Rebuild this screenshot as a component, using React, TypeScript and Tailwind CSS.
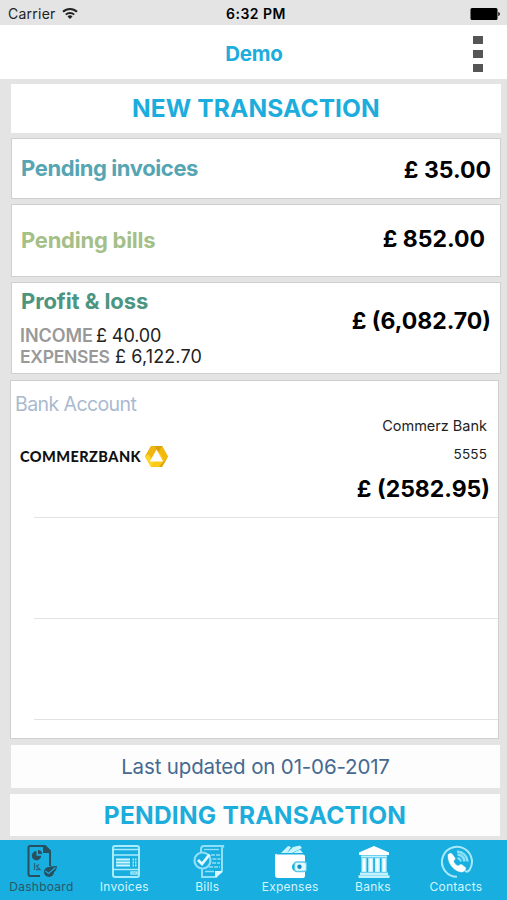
import type { ReactNode } from "react";

function Wifi() {
  return (
    <svg className="ml-[6px] h-[13px] w-[16px]" viewBox="0 0 16 13" fill="none" stroke="#222" strokeWidth="2">
      <path d="M1 4.8a10 10 0 0 1 14 0" />
      <path d="M3.8 7.6a6 6 0 0 1 8.4 0" />
      <path d="M8 12 5.5 9.5a3.6 3.6 0 0 1 5 0Z" fill="#222" stroke="none" />
    </svg>
  );
}

function StatusBar() {
  return (
    <div className="grid h-[25px] grid-cols-3 items-center pt-[2px] pr-[7px] pl-[8px] text-[14px] leading-none text-[#222]">
      <div className="flex items-center">
        <span className="tracking-[0.250px]">Carrier</span>
        <Wifi />
      </div>
      <div className="pl-[4px] text-center text-[14px] font-semibold tracking-[0.500px] whitespace-nowrap text-black">6:32 PM</div>
      <svg className="h-[12px] w-[30px] justify-self-end" viewBox="0 0 30 12">
        <rect x="0.5" y="0" width="27" height="12" rx="1.5" />
        <path d="M28.3 4c2 .5 2 3.500 0 4z" />
      </svg>
    </div>
  );
}

function Card({ className, children }: { className: string; children: ReactNode }) {
  return <section className={`shrink-0 border border-[#cfcfcf] bg-white ${className}`}>{children}</section>;
}

function DashboardIcon() {
  return (
    <svg className="h-[34px] w-[34px]" viewBox="0 0 34 34" fill="none" stroke="#28505f" strokeWidth="2">
      <path d="M16 31H6a1.500 1.500 0 0 1-1.500-1.500V2.500A1.500 1.500 0 0 1 6 1h15l5 5v15" />
      <path d="M20 1v6h6" fill="#28505f" />
      <path d="M12.500 6a4.700 4.700 0 1 0 4.700 4.700h-4.700z" fill="#28505f" stroke="none" />
      <path d="M14 5a4 4 0 0 1 4 4h-4z" fill="#28505f" stroke="none" />
      <path d="M10.500 18v7M12 20.500l4 4h-4M13 21l2-1.500" strokeWidth="1.300" opacity="0.750" />
      <circle cx="25" cy="27" r="5" fill="#28505f" stroke="none" />
      <path d="M25.500 21.500 33 21c-.5 4-2 6-5 7z" fill="#28505f" stroke="none" />
      <path d="m21.500 26 3 2.500 7-6" stroke="#18aee0" strokeWidth="1.100" />
    </svg>
  );
}

function InvoicesIcon() {
  return (
    <svg className="ml-[2px] h-[34px] w-[34px]" viewBox="0 0 34 34" fill="none" stroke="#a9ecfd" strokeWidth="2">
      <rect x="5" y="1" width="26" height="31" rx="2" />
      <path d="M5 4.500h26M5 10h26M5 24.500h26" strokeWidth="1.600" />
      <path d="M8 14.500h14M8 17.500h14M8 20.500h14" stroke="#cdf7ff" strokeWidth="2" />
      <path d="M24.500 14.500h4M24.500 17.500h4M24.500 20.500h4" strokeWidth="2" strokeDasharray="1.500 1" />
      <rect x="23" y="27" width="6" height="2" strokeWidth="1.400" />
    </svg>
  );
}

function BillsIcon() {
  return (
    <svg className="ml-[3px] h-[34px] w-[34px]" viewBox="0 0 34 34" fill="none" stroke="#8fe0f8" strokeWidth="2">
      <path d="M9 7V4a3 3 0 0 1 3-3h20a3 3 0 0 0-2 3v22l-6 6H10V24" />
      <path d="M24 32v-5h6" fill="#dcfaff" stroke="#dcfaff" />
      <path d="M12 4.500h15" strokeWidth="1.300" />
      <path d="M19 10h9M20.500 14h8M20 18h8M17 22h11" strokeWidth="1.700" strokeDasharray="4 1" />
      <path d="M13 26.500h9" strokeWidth="1.500" />
      <circle cx="10.500" cy="15.500" r="8" fill="#18aee0" strokeWidth="2.200" />
      <path d="m6 15 4 4 7.500-9.500" stroke="#e7fcff" strokeWidth="2.800" />
    </svg>
  );
}

function ExpensesIcon() {
  return (
    <svg className="h-[34px] w-[34px]" viewBox="0 0 34 34">
      <path d="m8 8 7-7 3 1-4 6zM14 8l6-6 7-1.500 2 2.500-10 5zM20 8l7-3.500 3 3.500z" fill="#c9f5ff" />
      <path d="M3 8.500a2 2 0 0 0 2 1h25a2 2 0 0 1 2 2V17h-8a5 5 0 0 0 0 10h8v4a2 2 0 0 1-2 2H5a3 3 0 0 1-3-3V10z" fill="#fff" />
      <rect x="21.500" y="17" width="12" height="9.500" rx="2.500" fill="#e4f9ff" stroke="#58cbea" strokeWidth="1.300" />
      <circle cx="26.500" cy="21.800" r="2.200" fill="#158eb8" />
    </svg>
  );
}

function BanksIcon() {
  return (
    <svg className="ml-[2px] h-[34px] w-[34px]" viewBox="0 0 34 34" fill="#c4f2ff">
      <path d="M17 1 2 7.500V10h30V7.500z" fill="#fff" />
      <path d="M4 10.500h26v2H4zM3 27.500h28V30H3zM1.500 30.300h31V33h-31z" />
      <path d="M4.500 13h5v14h-5zM11.200 13h5v14h-5zM17.900 13h5v14h-5zM24.600 13h5v14h-5z" />
      <path d="M7 14v12M13.700 14v12M20.400 14v12M27.100 14v12" stroke="#fff" strokeWidth="2" />
    </svg>
  );
}

function ContactsIcon() {
  return (
    <svg className="ml-[3px] h-[34px] w-[34px]" viewBox="0 0 34 34" fill="none" stroke="#a9eafa" strokeWidth="2">
      <path d="M17 31.800A15 15 0 1 1 29.500 25c-1.500 1.800-3 2-4.500 1" />
      <path d="M8 11c0-2.500 2.500-3.500 4-2l3 4c.7 1.200-1.500 2.500-1.500 3.500 1 2 2.500 3.500 4.500 4.500 1 0 2-2 3.500-1.500l4 3c1 2-1.500 4.500-4 4.500C15 26.500 8 19.500 8 11z" fill="#fff" stroke="#fff" strokeWidth="0.500" />
      <path d="M17 6.500c6 .5 10 4.500 10.500 10M17.500 9.500c4.500.5 6.500 3 7 7" stroke="#8be2f8" strokeWidth="2.600" />
      <path d="M17.500 13c2 .5 3 1.500 3.500 3.500" stroke="#8be2f8" strokeWidth="2" />
    </svg>
  );
}

function Tab({ icon, label, active = false }: { icon: ReactNode; label: string; active?: boolean }) {
  return (
    <div className="flex w-[82.900px] shrink-0 flex-col items-center pt-[5px]">
      {icon}
      <span className={`text-[12px] leading-[16px] tracking-[0.250px] ${active ? "text-[#2b5766]" : "text-[#d4f5ff]"}`}>{label}</span>
    </div>
  );
}

function BankLogo() {
  return (
    <div className="flex items-center">
      <span className="w-[122px] pt-px font-['Lato'] text-[14.500px] leading-[20px] font-black tracking-[0.450px] whitespace-nowrap text-[#111]">COMMERZBANK</span>
      <svg className="ml-[3px] h-[21px] w-[23px]" viewBox="0 0 23 21">
        <path d="M6 0h11l6 10.500L17 21H6L0 10.500z" fill="#fbc916" />
        <path d="M6 0h5.500v3.500L5 14.500 0 10.500z" fill="#f0b512" />
        <path d="M10 0h7l2 3.500-3 4.500-5-5z" fill="#d9a010" />
        <path d="m17 0 6 10.500-3 5.500L14 5z" fill="#f2b90f" />
        <path d="m0 10.500 3.500-2L9 16l-3 5z" fill="#ffd52a" />
        <path d="m18 15.500 3.500-2.500L17 21h-3z" fill="#e0a50b" />
        <path d="M11.500 3.700 4.800 15.500h13.400z" fill="#fff" />
      </svg>
    </div>
  );
}

export default function App() {
  return (
    <div className="flex h-[900px] w-[507px] flex-col overflow-hidden bg-[#e4e4e4] font-['Inter',sans-serif]">
      <StatusBar />
      <header className="flex h-[54px] shrink-0 items-center bg-white">
        <div className="w-[61px]" />
        <h1 className="grow pt-[3px] text-center text-[20.500px] leading-[30px] font-bold tracking-[-0.200px] text-[#1caddd]">
          Demo
        </h1>
        <div className="mt-[3px] mr-[24px] ml-[26px] flex w-[10px] flex-col gap-[6px]">
          <span className="h-[8px] bg-[#555]" />
          <span className="h-[8px] bg-[#555]" />
          <span className="h-[8px] bg-[#555]" />
        </div>
      </header>

      <button className="mt-[5px] mr-[6px] ml-[11px] h-[49px] shrink-0 bg-white text-center text-[24.500px] font-bold tracking-[0.120px] text-[#1caddd]">
        NEW TRANSACTION
      </button>

      <Card className="mt-[5px] mr-[6px] ml-[11px] flex h-[61px] items-center justify-between pr-[9px] pl-[9px]">
        <h2 className="pb-px text-[22px] leading-[28px] font-bold tracking-[-0.400px] text-[#56a5b3]">Pending invoices</h2>
        <span className="pt-[3px] text-[23px] leading-[28px] font-bold text-black">£ 35.00</span>
      </Card>

      <Card className="mt-[5px] mr-[6px] ml-[11px] flex h-[73px] items-center justify-between pr-[15px] pl-[9px]">
        <h2 className="pb-[2px] text-[22px] leading-[28px] font-bold tracking-[-0.250px] text-[#a5bf88]">Pending bills</h2>
        <span className="pb-[3px] text-[23px] leading-[28px] font-bold text-black">£ 852.00</span>
      </Card>

      <Card className="mt-[5px] mr-[6px] ml-[11px] flex h-[92px] justify-between pr-[9px] pl-[8px]">
        <div className="pt-[4px]">
          <h2 className="pl-px text-[22px] leading-[28px] font-bold tracking-[-0.100px] text-[#4c9580]">Profit &amp; loss</h2>
          <p className="mt-[10px] flex gap-[3px] text-[18px] leading-[21px] tracking-[-0.100px] text-[#222]">
            <span className="w-[73px] font-semibold tracking-[-0.050px] text-[#999]">INCOME</span>£ 40.00
          </p>
          <p className="flex gap-[5px] text-[18px] leading-[21px] tracking-[0.120px] text-[#222]">
            <span className="w-[90px] text-[17.500px] font-semibold tracking-[-0.250px] text-[#999]">EXPENSES</span>£ 6,122.70
          </p>
        </div>
        <span className="pt-[24px] text-[23px] leading-[28px] font-bold text-black">£ (6,082.70)</span>
      </Card>

      <Card className="mt-[6px] mr-[8px] ml-[10px] h-[359px]">
        <div className="flex h-[136px] justify-between pr-[8px] pl-[4px]">
          <div className="pt-[11px]">
            <h2 className="text-[19.500px] leading-[24px] tracking-[-0.580px] text-[#a9bacf]">Bank Account</h2>
            <div className="mt-[30px] pl-[5px]">
              <BankLogo />
            </div>
          </div>
          <div className="flex flex-col items-end pt-[34px] text-[#222]">
            <span className="pr-[3px] text-[14.500px] leading-[22px]">Commerz Bank</span>
            <span className="mt-[6px] pr-[3px] text-[13.500px] leading-[22px] tracking-[0.150px]">5555</span>
            <span className="mt-[10px] text-[23px] leading-[28px] font-bold text-black">£ (2582.95)</span>
          </div>
        </div>
        <div className="ml-[23px] h-[101px] border-t border-[#e2e2e2]" />
        <div className="ml-[23px] h-[101px] border-t border-[#e2e2e2]" />
        <div className="ml-[23px] border-t border-[#e2e2e2]" />
      </Card>

      <div className="mt-[6px] mr-[7px] ml-[11px] h-[43px] shrink-0 bg-[#fdfdfd] text-center text-[20.500px] leading-[44px] tracking-[-0.150px] text-[#456990]">
        Last updated on 01-06-2017
      </div>
      <button className="mt-[6px] mr-[7px] ml-[10px] h-[42px] shrink-0 bg-[#fdfdfd] text-center text-[24.500px] font-bold tracking-[0.220px] text-[#1caddd]">
        PENDING TRANSACTION
      </button>

      <nav className="mt-[4px] flex h-[60px] shrink-0 bg-[#18aee0]">
        <Tab icon={<DashboardIcon />} label="Dashboard" active />
        <Tab icon={<InvoicesIcon />} label="Invoices" />
        <Tab icon={<BillsIcon />} label="Bills" />
        <Tab icon={<ExpensesIcon />} label="Expenses" />
        <Tab icon={<BanksIcon />} label="Banks" />
        <Tab icon={<ContactsIcon />} label="Contacts" />
      </nav>
    </div>
  );
}
